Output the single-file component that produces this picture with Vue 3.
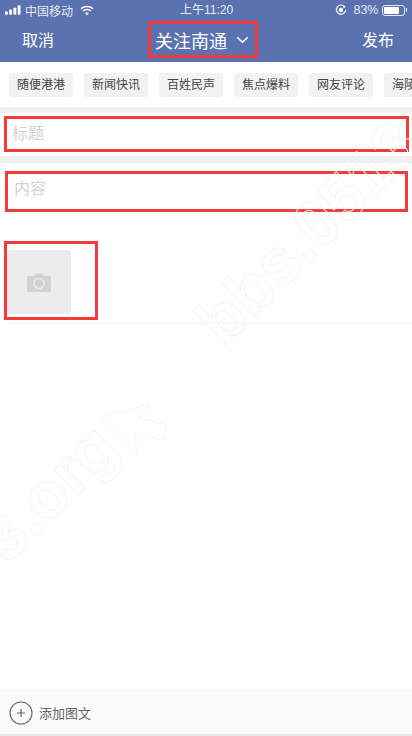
<script setup>
const tags = ['随便港港', '新闻快讯', '百姓民声', '焦点爆料', '网友评论', '海陵']
</script>

<template>
  <div class="page">
    <div class="header">
      <div class="status">
        <div class="status-left">
          <svg class="signal" width="16" height="10" viewBox="0 0 17 10" fill="#fff">
            <rect x="0" y="6.5" width="3" height="3.5" rx="0.7" />
            <rect x="4.5" y="4.5" width="3" height="5.5" rx="0.7" />
            <rect x="9" y="2.5" width="3" height="7.5" rx="0.7" />
            <rect x="13.5" y="0" width="3" height="10" rx="0.7" />
          </svg>
          <span class="carrier">中国移动</span>
          <svg class="wifi" width="14" height="11" viewBox="0 0 15 11" fill="none" stroke="#fff" stroke-width="1.7">
            <path d="M1 3.6C4.6 .4 10.4 .4 14 3.6" />
            <path d="M3.3 6C5.6 4 9.4 4 11.7 6" />
            <path d="M7.5 10.6 5.4 8.3C6.6 7.4 8.4 7.4 9.6 8.3Z" fill="#fff" stroke="none" />
          </svg>
        </div>
        <span class="clock">上午11:20</span>
        <div class="status-right">
          <svg width="12" height="12" viewBox="0 0 13 13" fill="none" stroke="#fff">
            <path d="M10.6 3.2A5 5 0 1 0 11.5 6.5" stroke-width="1.3" />
            <circle cx="6.5" cy="6.5" r="2.4" fill="#fff" stroke="none" />
            <path d="M9.4 1.4 11.6 3.6 8.9 4.2Z" fill="#fff" stroke="none" />
          </svg>
          <span class="percent">83%</span>
          <div class="battery"><div class="battery-fill"></div></div>
          <div class="battery-cap"></div>
        </div>
      </div>
      <div class="nav">
        <span class="nav-btn cancel">取消</span>
        <div class="nav-title red-box">
          <span>关注南通</span>
          <svg width="13" height="8" viewBox="0 0 13 8" fill="none" stroke="#fff" stroke-width="1.5">
            <path d="M1.2 1.2 6.5 6.3 11.8 1.2" />
          </svg>
        </div>
        <span class="nav-btn publish">发布</span>
      </div>
    </div>

    <div class="tags">
      <span v-for="t in tags" :key="t" class="tag">{{ t }}</span>
    </div>
    <div class="band"></div>

    <div class="field title-field red-box">标题</div>
    <div class="band second"></div>
    <div class="field content-field red-box">内容</div>

    <div class="upload-wrap red-box">
      <div class="upload">
        <svg width="24" height="19" viewBox="0 0 24 19">
          <path d="M2 3H7L8.5 0.6H15.5L17 3H22A2 2 0 0 1 24 5V17A2 2 0 0 1 22 19H2A2 2 0 0 1 0 17V5A2 2 0 0 1 2 3Z" fill="#d3d3d3" />
          <circle cx="12" cy="10.5" r="5" fill="none" stroke="#ececec" stroke-width="1.4" />
        </svg>
      </div>
    </div>
    <div class="divider"></div>

    <div class="spacer"></div>

    <div class="footer">
      <svg width="24" height="24" viewBox="0 0 24 24" fill="none" stroke="#666" stroke-width="1.1">
        <circle cx="12" cy="12" r="11" />
        <path d="M8 12H16M12 8V16" stroke-width="1.2" />
      </svg>
      <span class="footer-text">添加图文</span>
    </div>
    <div class="footer-edge"></div>

    <div class="watermark one">bbs.0513</div>
    <div class="watermark two">3.org</div>
    <svg class="arrow" width="70" height="50" viewBox="0 0 70 50" fill="none" stroke="#f4f4f4">
      <path d="M1 14 50 1 38 15 67 22 64 37 34 31 37 48Z" />
    </svg>
  </div>
</template>

<style scoped>
.page {
  position: relative;
  width: 412px;
  height: 736px;
  overflow: hidden;
  background: #fff;
  display: flex;
  flex-direction: column;
  font-family: "Liberation Sans", "Noto Sans CJK SC", sans-serif;
}

.header { background: #5a72b0; color: #fff; height: 62px; flex-shrink: 0; }

.status {
  height: 20px;
  display: flex;
  align-items: center;
  justify-content: space-between;
  position: relative;
  font-size: 12px;
  color: #e6eaf5;
}
.status-left { display: flex; align-items: center; margin-left: 5px; }
.carrier { margin-left: 4px; font-size: 12px; letter-spacing: 0; }
.wifi { margin-left: 7px; }
.clock { position: absolute; left: 180px; top: 2px; font-size: 12px; line-height: 16px; }
.status-right { display: flex; align-items: center; margin-right: 5px; }
.percent { margin-left: 6px; font-size: 12.5px; }
.battery {
  margin-left: 3px;
  width: 23px;
  height: 11px;
  border: 1px solid #e6eaf5;
  border-radius: 3px;
  padding: 1px;
  box-sizing: border-box;
}
.battery-fill { width: 80%; height: 100%; background: #fff; border-radius: 1px; }
.battery-cap { width: 1.5px; height: 4px; background: #e6eaf5; margin-left: 1px; }

.nav {
  height: 42px;
  display: flex;
  align-items: center;
  position: relative;
  font-size: 16px;
}
.nav-btn { position: absolute; top: 11px; line-height: 20px; }
.cancel { left: 22px; }
.publish { right: 18px; }
.red-box { border: 3px solid #f53a3a; box-sizing: border-box; }
.nav-title {
  margin: -3px 0 0 148px;
  width: 110px;
  height: 37px;
  padding-left: 4px;
  display: flex;
  align-items: center;
  gap: 9px;
  white-space: nowrap;
  font-size: 18px;
}

.tags {
  height: 45px;
  flex-shrink: 0;
  display: flex;
  align-items: center;
  gap: 11px;
  padding-left: 9px;
  overflow: hidden;
}
.tag {
  flex-shrink: 0;
  width: 64px;
  height: 24px;
  line-height: 24px;
  padding-left: 8px;
  box-sizing: border-box;
  background: #f2f2f2;
  border-radius: 3px;
  font-size: 12px;
  color: #444;
  white-space: nowrap;
}

.band { height: 6px; background: #f0f0f0; flex-shrink: 0; }
.band.second { height: 7px; margin-top: 4px; }

.field { flex-shrink: 0; font-size: 16px; color: #d2d2d4; }
.title-field {
  margin: 3px 3px 0 4px;
  height: 36px;
  line-height: 30px;
  padding-left: 5px;
}
.content-field {
  margin: 8px 4px 0 5px;
  height: 41px;
  line-height: 29px;
  padding-left: 6px;
}

.upload-wrap {
  margin: 29px 0 0 4px;
  width: 94px;
  height: 79px;
  flex-shrink: 0;
  padding: 6px 0 0 0;
}
.upload {
  width: 64px;
  height: 64px;
  background: #ececec;
  border-radius: 2px;
  display: flex;
  align-items: center;
  justify-content: center;
}

.divider { height: 1px; background: #f3f3f3; margin: 3px 0 0 7px; flex-shrink: 0; }
.spacer { flex: 1; }

.footer {
  height: 44px;
  flex-shrink: 0;
  background: #fafafa;
  border-top: 1px solid #f0f0f0;
  box-sizing: border-box;
  display: flex;
  align-items: center;
  padding-left: 9px;
}
.footer-text { margin-left: 6px; font-size: 13px; color: #666; }
.footer-edge { height: 2px; background: #e9e9e9; flex-shrink: 0; }

/* faint watermark over the page */
.watermark {
  position: absolute;
  font-family: "Liberation Sans", sans-serif;
  font-weight: 700;
  font-size: 66px;
  line-height: 70px;
  color: transparent;
  -webkit-text-stroke: 1px #f3f3f3;
  transform: rotate(-45deg);
  transform-origin: left bottom;
  white-space: nowrap;
  pointer-events: none;
}
.watermark.one { left: 232px; top: 287px; }
.watermark.two { left: 16px; top: 504px; }
.arrow { position: absolute; left: 100px; top: 403px; pointer-events: none; }
</style>
